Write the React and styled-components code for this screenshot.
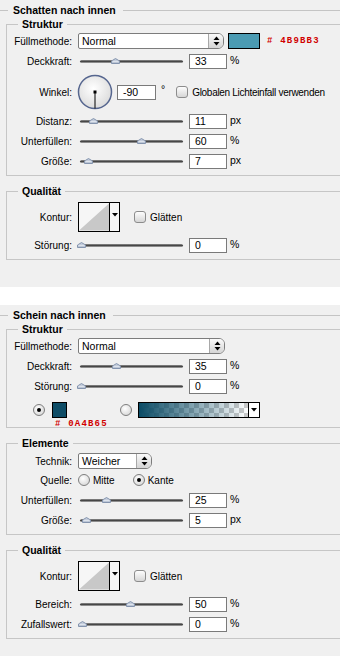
import styled, { createGlobalStyle } from 'styled-components';

const GlobalStyle = createGlobalStyle`
    body {
        margin: 0;
        background: #fff;
        font-family: "Liberation Sans", Arial, sans-serif;
        font-size: 10px;
        color: #000;
    }
`

const Page = styled.div`
    width: 340px;
    overflow: hidden;
`

const Section = styled.div`
    background: #f0f0f0;
    padding-bottom: ${p => p.$pb}px;
    margin-bottom: ${p => p.$mb || 0}px;
`

const SectionTitle = styled.div`
    display: flex;
    align-items: center;
    gap: 5px;
    height: 14px;
    padding-top: 3px;
    font-weight: bold;
    font-size: 10.5px;

    &::before, &::after {
        content: '';
        height: 1px;
        background: #c4c4c4;
    }
    &::before { width: 8px; }
    &::after { flex: 1; margin-left: 2px; }
`

const Group = styled.fieldset`
    margin: ${p => p.$mt}px 0 0 6px;
    border: 1px solid #c6c6c6;
    border-right: none;
    padding: 3px 0 ${p => p.$pb}px 0;
    min-width: 0;
`

const Legend = styled.legend`
    margin-left: 11px;
    padding: 0 4px;
    font-weight: bold;
    font-size: 10.5px;
    line-height: 12px;
`

const Row = styled.div`
    display: flex;
    align-items: ${p => p.$align || 'center'};
    height: ${p => p.$h}px;
    margin-top: ${p => p.$mt || 0}px;
    margin-left: ${p => p.$ml || 0}px;
`

const Label = styled.div`
    flex: none;
    width: 65px;
    margin-right: 6px;
    text-align: right;
    white-space: nowrap;
`

const Select = styled.div`
    display: flex;
    width: ${p => p.$w}px;
    height: 16px;
    box-sizing: border-box;
    border: 1px solid #7c7c7c;
    border-radius: 2px 6px 6px 2px;
    background: #fff;
    overflow: hidden;
`

const SelectText = styled.div`
    flex: 1;
    padding-left: 3px;
    line-height: 14px;
    font-size: 10.5px;
`

const SelectArrow = styled.div`
    flex: none;
    width: 14px;
    display: flex;
    align-items: center;
    justify-content: center;
    border-left: 1px solid #a8a8a8;
    background: linear-gradient(#fafafa, #d4d4d4);
`

const Swatch = styled.div`
    flex: none;
    width: ${p => p.$w}px;
    height: 16px;
    box-sizing: border-box;
    margin-left: ${p => p.$ml || 0}px;
    border: 1px solid #000;
    background: ${p => p.$color};
`

const Hex = styled.div`
    margin-left: ${p => p.$ml || 0}px;
    margin-top: ${p => p.$mt || 0}px;
    font-family: "Liberation Mono", monospace;
    font-weight: bold;
    font-size: 9px;
    line-height: 8px;
    letter-spacing: 1.2px;
    color: #d00000;
    white-space: nowrap;
`

const SliderBox = styled.div`
    position: relative;
    flex: none;
    width: 105px;
    height: 16px;
    margin-right: 6px;
`

const Track = styled.div`
    position: absolute;
    left: 2px;
    right: 0;
    top: 7px;
    height: 3px;
    border-radius: 2px;
    background: linear-gradient(#9a9a9a, #3e3e3e 45%, #6a6a6a 70%, #b8b8b8);
`

const Thumb = styled.svg`
    position: absolute;
    top: 5px;
`

const NumBox = styled.div`
    flex: none;
    width: ${p => p.$w || 38}px;
    height: 15px;
    box-sizing: border-box;
    margin-left: ${p => p.$ml || 0}px;
    border: 1px solid #7a7a7a;
    background: #fff;
    padding-left: 5px;
    line-height: 13px;
    font-size: 10.5px;
`

const Unit = styled.div`
    align-self: flex-start;
    margin-left: ${p => p.$ml || 3}px;
    margin-top: ${p => p.$mt || 1}px;
    font-size: 10.5px;
`

const Check = styled.div`
    flex: none;
    width: 12px;
    height: 12px;
    box-sizing: border-box;
    margin-left: ${p => p.$ml}px;
    border: 1px solid #8c8c8c;
    border-radius: 3px;
    background: linear-gradient(#fdfdfd, #d6d6d6);
`

const Text = styled.div`
    margin-left: ${p => p.$ml || 0}px;
    letter-spacing: ${p => p.$ls || 0}px;
    white-space: nowrap;
`

const Radio = styled.div`
    flex: none;
    width: 12px;
    height: 12px;
    box-sizing: border-box;
    margin-left: ${p => p.$ml || 0}px;
    margin-top: ${p => p.$mt || 0}px;
    border: 1px solid #7e7e7e;
    border-radius: 50%;
    background: radial-gradient(circle at 40% 35%, #fff, #cfcfcf);
    display: flex;
    align-items: center;
    justify-content: center;

    &::after {
        content: '';
        display: ${p => p.$on ? 'block' : 'none'};
        width: 4px;
        height: 4px;
        border-radius: 50%;
        background: #000;
    }
`

const Contour = styled.div`
    flex: none;
    display: flex;
    width: 42px;
    height: 30px;
    box-sizing: border-box;
    border: 1px solid #000;
    background: #f6f6f6;
`

const ContourArrow = styled.div`
    flex: none;
    width: 10px;
    border-left: 1px solid #000;
    display: flex;
    justify-content: center;
    padding-top: 10px;
    box-sizing: border-box;
`

const GradientPicker = styled.div`
    flex: none;
    display: flex;
    width: 122px;
    height: 16px;
    box-sizing: border-box;
    margin-left: ${p => p.$ml}px;
    border: 1px solid #000;
`

const GradientFill = styled.div`
    flex: 1;
    background:
        linear-gradient(to right, #0a4b65, rgba(10, 75, 101, 0)),
        repeating-conic-gradient(#cbcbcb 0 25%, #fff 0 50%) 0 0 / 10px 10px;
`

const PickerArrow = styled.div`
    flex: none;
    width: 10px;
    border-left: 1px solid #000;
    background: #fff;
    display: flex;
    align-items: center;
    justify-content: center;
`

const SwatchColumn = styled.div`
    display: flex;
    flex-direction: column;
    margin-left: ${p => p.$ml}px;
`

function UpDown() {
    return (
        <svg width="7" height="10" viewBox="0 0 7 10">
            <polygon points="3.5,0.5 6.5,4 0.5,4" fill="#000" />
            <polygon points="0.5,6 6.5,6 3.5,9.5" fill="#000" />
        </svg>
    );
}

function DownTri() {
    return (
        <svg width="6" height="4" viewBox="0 0 6 4">
            <polygon points="0,0 6,0 3,3.5" fill="#000" />
        </svg>
    );
}

function Slider({ pos }) {
    return (
        <SliderBox>
            <Track />
            <Thumb width="9" height="6" viewBox="0 0 9 6" style={{ left: pos - 1 }}>
                <polygon points="0.5,5.5 0.5,3 4.5,0.5 8.5,3 8.5,5.5" fill="#bcc6d6" stroke="#8494ae" />
                <line x1="1.5" y1="3.3" x2="7.5" y2="3.3" stroke="#e6ebf3" />
            </Thumb>
        </SliderBox>
    );
}

function SliderRow({ label, pos, value, unit, mt }) {
    return (
        <Row $h={16} $mt={mt}>
            <Label>{label}</Label>
            <Slider pos={pos} />
            <NumBox>{value}</NumBox>
            <Unit>{unit}</Unit>
        </Row>
    );
}

function Dial() {
    return (
        <svg width="36" height="36" viewBox="0 0 36 36" style={{ marginLeft: -1 }}>
            <defs>
                <radialGradient id="dialFill" cx="45%" cy="40%" r="60%">
                    <stop offset="0%" stopColor="#ffffff" />
                    <stop offset="100%" stopColor="#dcdcdc" />
                </radialGradient>
            </defs>
            <circle cx="18" cy="18" r="16.5" fill="url(#dialFill)" stroke="#56668f" strokeWidth="1.5" />
            <line x1="18" y1="18" x2="18" y2="34.5" stroke="#000" strokeWidth="1" />
            <rect x="16.5" y="16.5" width="3" height="3" fill="#000" />
        </svg>
    );
}

function ContourPreview() {
    return (
        <Contour>
            <svg width="31" height="28" viewBox="0 0 31 28">
                <polygon points="0,28 31,0 31,28" fill="#c8c8c8" />
            </svg>
            <ContourArrow>
                <DownTri />
            </ContourArrow>
        </Contour>
    );
}

function QualityGroup({ mt, rows }) {
    return (
        <Group $mt={mt} $pb={6}>
            <Legend>Qualität</Legend>
            <Row $h={30} $mt={2}>
                <Label>Kontur:</Label>
                <ContourPreview />
                <Check $ml={14} />
                <Text $ml={4}>Glätten</Text>
            </Row>
            {rows.map((r, i) => (
                <SliderRow key={r.label} {...r} mt={i === 0 ? 5 : 4} />
            ))}
        </Group>
    );
}

export default function App() {
    return (
        <Page>
            <GlobalStyle />
            <Section $pb={27} $mb={18}>
                <SectionTitle>Schatten nach innen</SectionTitle>
                <Group $mt={1} $pb={6}>
                    <Legend>Struktur</Legend>
                    <Row $h={16}>
                        <Label>Füllmethode:</Label>
                        <Select $w={146}>
                            <SelectText>Normal</SelectText>
                            <SelectArrow><UpDown /></SelectArrow>
                        </Select>
                        <Swatch $w={32} $ml={4} $color="#4b9bb3" />
                        <Hex $ml={7}># 4B9BB3</Hex>
                    </Row>
                    <SliderRow label="Deckkraft:" pos={34} value="33" unit="%" mt={4} />
                    <Row $h={34} $mt={6}>
                        <Label>Winkel:</Label>
                        <Dial />
                        <NumBox $w={39} $ml={4}>-90</NumBox>
                        <Unit $ml={5} $mt={8}>°</Unit>
                        <Check $ml={11} />
                        <Text $ml={4} $ls={-0.3}>Globalen Lichteinfall verwenden</Text>
                    </Row>
                    <SliderRow label="Distanz:" pos={12} value="11" unit="px" mt={4} />
                    <SliderRow label="Unterfüllen:" pos={60} value="60" unit="%" mt={4} />
                    <SliderRow label="Größe:" pos={7} value="7" unit="px" mt={4} />
                </Group>
                <QualityGroup
                    mt={9}
                    rows={[{ label: 'Störung:', pos: 0, value: '0', unit: '%' }]}
                />
            </Section>

            <Section $pb={17}>
                <SectionTitle>Schein nach innen</SectionTitle>
                <Group $mt={1} $pb={1}>
                    <Legend>Struktur</Legend>
                    <Row $h={16}>
                        <Label>Füllmethode:</Label>
                        <Select $w={147}>
                            <SelectText>Normal</SelectText>
                            <SelectArrow><UpDown /></SelectArrow>
                        </Select>
                    </Row>
                    <SliderRow label="Deckkraft:" pos={35} value="35" unit="%" mt={4} />
                    <SliderRow label="Störung:" pos={0} value="0" unit="%" mt={4} />
                    <Row $h={24} $mt={8} $ml={26} $align="flex-start">
                        <Radio $on $mt={2} />
                        <SwatchColumn $ml={7}>
                            <Swatch $w={15} $color="#0e4d67" />
                            <Hex $mt={2} $ml={3}># 0A4B65</Hex>
                        </SwatchColumn>
                        <Radio $ml={12} $mt={2} />
                        <GradientPicker $ml={6}>
                            <GradientFill />
                            <PickerArrow><DownTri /></PickerArrow>
                        </GradientPicker>
                    </Row>
                </Group>
                <Group $mt={9} $pb={6}>
                    <Legend>Elemente</Legend>
                    <Row $h={16} $mt={1}>
                        <Label>Technik:</Label>
                        <Select $w={74}>
                            <SelectText>Weicher</SelectText>
                            <SelectArrow><UpDown /></SelectArrow>
                        </Select>
                    </Row>
                    <Row $h={14} $mt={4}>
                        <Label>Quelle:</Label>
                        <Radio />
                        <Text $ml={3}>Mitte</Text>
                        <Radio $on $ml={18} />
                        <Text $ml={3}>Kante</Text>
                    </Row>
                    <SliderRow label="Unterfüllen:" pos={25} value="25" unit="%" mt={5} />
                    <SliderRow label="Größe:" pos={5} value="5" unit="px" mt={4} />
                </Group>
                <QualityGroup
                    mt={9}
                    rows={[
                        { label: 'Bereich:', pos: 49, value: '50', unit: '%' },
                        { label: 'Zufallswert:', pos: 1, value: '0', unit: '%' },
                    ]}
                />
            </Section>
        </Page>
    );
}
